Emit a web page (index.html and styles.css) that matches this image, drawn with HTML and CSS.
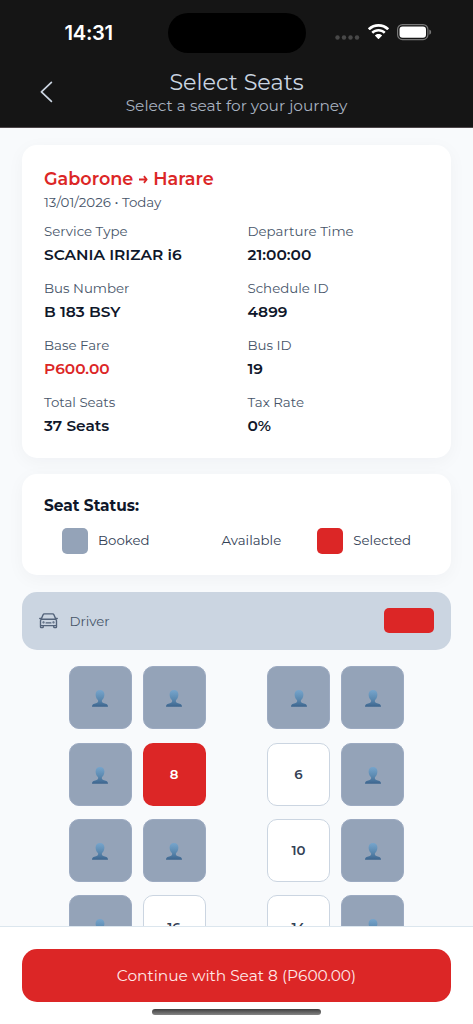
FILE: index.html
```html
<!DOCTYPE html>
<html lang="en">
<head>
<meta charset="utf-8">
<meta name="viewport" content="width=device-width, initial-scale=1">
<title>Select Seats</title>
<link rel="stylesheet" href="styles.css">
</head>
<body>
<svg class="sprite" width="0" height="0" aria-hidden="true">
  <defs>
    <linearGradient id="bust" x1="0" y1="0" x2="0" y2="1">
      <stop offset="0" stop-color="#77a5cc"/>
      <stop offset="0.55" stop-color="#5b89b0"/>
      <stop offset="1" stop-color="#3c648d"/>
    </linearGradient>
    <symbol id="person" viewBox="0 0 16 17">
      <path fill="url(#bust)" d="M8 0C5.200 0 3.500 1.900 3.600 4.700C3.700 7 4.700 9 6 10.100C6.500 11.900 5.900 12.700 4 13.200C1.500 13.800 0 14.400 0 16.800H16C16 14.400 14.500 13.800 12 13.200C10.100 12.700 9.500 11.900 10 10.100C11.300 9 12.300 7 12.400 4.700C12.500 1.900 10.800 0 8 0Z"/>
    </symbol>
  </defs>
</svg>
<div class="screen">
  <header class="header">
    <div class="status">
      <span class="clock">14:31</span>
      <span class="island"></span>
      <span class="signals">
        <svg class="dots" width="25" height="5" viewBox="0 0 25 5" fill="#484848"><circle cx="2.500" cy="2.500" r="2.200"/><circle cx="9" cy="2.500" r="2.200"/><circle cx="15.500" cy="2.500" r="2.200"/><circle cx="22" cy="2.500" r="2.200"/></svg>
        <svg class="wifi" width="21" height="16" viewBox="0 0 21 16" fill="#fff"><path d="M10.500 0C6.500 0 2.900 1.500 .2 4.100Q-.1 4.400.2 4.700L1.500 6Q1.800 6.200 2.100 6C4.300 3.900 7.200 2.700 10.500 2.700S16.700 3.900 18.900 6Q19.200 6.200 19.500 6L20.800 4.700Q21.100 4.400 20.800 4.100C18.100 1.500 14.500 0 10.500 0Z"/><path d="M10.500 5C7.800 5 5.500 6 3.700 7.600Q3.400 7.900 3.700 8.200L5 9.500Q5.300 9.700 5.600 9.500C6.900 8.300 8.600 7.600 10.500 7.600S14.100 8.300 15.400 9.500Q15.700 9.700 16 9.500L17.300 8.200Q17.600 7.900 17.300 7.600C15.500 6 13.200 5 10.500 5Z"/><path d="M10.500 10C9.200 10 8 10.500 7.100 11.200Q6.800 11.500 7.100 11.800L10.200 14.900Q10.500 15.200 10.800 14.900L13.900 11.800Q14.200 11.500 13.900 11.200C13 10.500 11.800 10 10.500 10Z"/></svg>
        <svg class="battery" width="35" height="17" viewBox="0 0 35 17"><rect x=".6" y=".6" width="30.300" height="15" rx="4.800" fill="none" stroke="#777" stroke-width="1.200"/><rect x="2.500" y="2.500" width="26.500" height="11.200" rx="3" fill="#fff"/><path d="M32.300 5.400Q34.200 6.200 34.200 8.100T32.300 10.800Z" fill="#777"/></svg>
      </span>
    </div>
    <div class="nav">
      <svg class="back" width="13" height="22" viewBox="0 0 13 22" fill="none" stroke="#cbd5e1" stroke-width="1.700" stroke-linecap="round" stroke-linejoin="round"><path d="M11.400 1.400L1.400 10.900L11.400 20.400"/></svg>
      <div class="titles">
        <h1 class="title">Select Seats</h1>
        <p class="subtitle">Select a seat for your journey</p>
      </div>
    </div>
  </header>

  <main class="content">
    <section class="card trip">
      <h2 class="route"><span>Gaborone</span><svg class="arrow" width="9" height="9" viewBox="0 0 9 9" fill="none" stroke="#dc2626" stroke-width="1.800" stroke-linejoin="round"><path d="M0 4.500H7.500M4.900 1.200L7.700 4.500L4.900 7.800"/></svg><span>Harare</span></h2>
      <p class="date">13/01/2026 • Today</p>
      <dl class="facts">
        <div class="fact"><dt>Service Type</dt><dd>SCANIA IRIZAR i6</dd></div>
        <div class="fact"><dt>Departure Time</dt><dd>21:00:00</dd></div>
        <div class="fact"><dt>Bus Number</dt><dd>B 183 BSY</dd></div>
        <div class="fact"><dt>Schedule ID</dt><dd>4899</dd></div>
        <div class="fact"><dt>Base Fare</dt><dd class="fare">P600.00</dd></div>
        <div class="fact"><dt>Bus ID</dt><dd>19</dd></div>
        <div class="fact"><dt>Total Seats</dt><dd>37 Seats</dd></div>
        <div class="fact"><dt>Tax Rate</dt><dd>0%</dd></div>
      </dl>
    </section>

    <section class="card legend">
      <h2 class="legend-title">Seat Status:</h2>
      <div class="legend-items">
        <div class="key"><span class="swatch booked"></span><span>Booked</span></div>
        <div class="key"><span class="swatch free"></span><span>Available</span></div>
        <div class="key"><span class="swatch chosen"></span><span>Selected</span></div>
      </div>
    </section>

    <section class="driver">
      <svg class="car" width="19" height="16" viewBox="0 0 20 17" fill="none" stroke="#53637a" stroke-width="1.450" stroke-linejoin="round" stroke-linecap="round"><path d="M2.200 6.600L4.200 2Q4.600 .9 5.700 .9H14.300Q15.400 .9 15.800 2L17.800 6.600M.7 5.800H1.900M18.100 5.800H19.300M2.200 6.600H17.800L18.500 8.200V14.900Q18.500 15.600 17.800 15.600H16.300Q15.600 15.600 15.600 14.900V13.400H4.400V14.900Q4.400 15.600 3.700 15.600H2.200Q1.500 15.600 1.500 14.900V8.200ZM1.500 13.400H4.400M15.600 13.400H18.500M7.500 10.500H12.500"/><circle cx="4.700" cy="10" r=".45"/><circle cx="15.300" cy="10" r=".45"/></svg>
      <span class="driver-label">Driver</span>
      <span class="door"></span>
    </section>

    <section class="seats">
      <div class="row">
        <div class="pair"><div class="seat taken"><svg><use href="#person"/></svg></div><div class="seat taken"><svg><use href="#person"/></svg></div></div>
        <div class="pair"><div class="seat taken"><svg><use href="#person"/></svg></div><div class="seat taken"><svg><use href="#person"/></svg></div></div>
      </div>
      <div class="row">
        <div class="pair"><div class="seat taken"><svg><use href="#person"/></svg></div><div class="seat selected">8</div></div>
        <div class="pair"><div class="seat open">6</div><div class="seat taken"><svg><use href="#person"/></svg></div></div>
      </div>
      <div class="row">
        <div class="pair"><div class="seat taken"><svg><use href="#person"/></svg></div><div class="seat taken"><svg><use href="#person"/></svg></div></div>
        <div class="pair"><div class="seat open">10</div><div class="seat taken"><svg><use href="#person"/></svg></div></div>
      </div>
      <div class="row">
        <div class="pair"><div class="seat taken"><svg><use href="#person"/></svg></div><div class="seat open">16</div></div>
        <div class="pair"><div class="seat open">14</div><div class="seat taken"><svg><use href="#person"/></svg></div></div>
      </div>
    </section>
  </main>

  <footer class="footer">
    <button class="continue" type="button">Continue with Seat 8 (P600.00)</button>
    <span class="home-bar"></span>
  </footer>
</div>
</body>
</html>
```
FILE: styles.css
```css
* { box-sizing: border-box; margin: 0; padding: 0; }
body { font-family: Montserrat, Inter, sans-serif; color: #0f172a; background: #f8fafc; }
.sprite { position: absolute; }
.screen { display: flex; flex-direction: column; width: 473px; height: 1024px; overflow: hidden; background: #f8fafc; }

.header { flex: none; height: 128px; background: #151515; border-bottom: 1px solid #4d4649; }
.status { display: grid; grid-template-columns: 167.500px 138px 1fr; height: 66px; padding-top: 12.500px; }
.clock { padding: 6.500px 0 0 64.500px; font: 600 20.200px/27px Inter, sans-serif; letter-spacing: -0.300px; color: #fff; }
.island { height: 40.500px; border-radius: 21px; background: #000; }
.signals { display: flex; padding: 11.500px 0 0 29.500px; }
.dots { margin-top: 11px; }
.wifi { margin-left: 7.500px; }
.battery { margin-left: 8px; }
.nav { display: grid; grid-template-columns: 60px 1fr 60px; }
.back { margin: 14.500px 0 0 40px; }
.titles { text-align: center; }
.title { margin-top: 2px; font-size: 22.300px; font-weight: 400; line-height: 28px; color: #cbd5e1; }
.subtitle { font-size: 15.400px; line-height: 19px; color: #a8b2c0; }

.content { flex: 1; min-height: 0; overflow: hidden; padding: 17px 22px 0; }
.card { padding: 0 22px; border-radius: 15px; background: #fff; box-shadow: 0 4px 18px rgba(15, 23, 42, 0.040); }
.trip { height: 312.500px; padding-top: 22px; }
.route { display: flex; align-items: center; height: 23px; font-size: 17.600px; font-weight: 600; color: #dc2626; }
.arrow { margin: 1px 5.500px 0 5.500px; }
.date { margin-top: 3px; font-size: 13.400px; line-height: 18px; color: #475569; }
.facts { display: grid; grid-template-columns: 1fr 1fr; column-gap: 22px; margin-top: 11px; }
.fact { height: 57.100px; }
.fact dt { font-size: 13.350px; line-height: 18px; color: #475569; }
.fact dd { margin-top: 3.500px; font-size: 15.400px; font-weight: 600; line-height: 21px; color: #0f172a; }
.fact .fare { color: #dc2626; }

.legend { height: 101px; margin-top: 16.500px; padding-top: 21px; }
.legend-title { font-size: 15.400px; font-weight: 700; line-height: 22px; }
.legend-items { display: flex; justify-content: space-around; margin-top: 11px; }
.key { display: flex; align-items: center; gap: 10.500px; font-size: 13.300px; line-height: 16px; color: #334155; }
.key span:last-child { padding-bottom: 1px; }
.swatch { width: 25.500px; height: 25.500px; border-radius: 5px; }
.booked { background: #94a3b8; }
.free { background: #fff; }
.chosen { background: #dc2626; }

.driver { display: flex; align-items: center; height: 58px; margin-top: 16.700px; padding: 0 17px; border-radius: 15px; background: #cbd5e1; }
.driver-label { margin-left: 11.500px; font-size: 13.300px; color: #475569; }
.door { width: 50.500px; height: 25px; margin-left: auto; border-radius: 5px; background: #dc2626; }

.seats { margin-top: 16.800px; padding: 0 47px 0 46.500px; }
.row { display: flex; justify-content: space-between; height: 76.200px; }
.pair { display: flex; gap: 11px; }
.seat { display: flex; align-items: center; justify-content: center; width: 63px; height: 63px; border-radius: 10px; font-size: 13.300px; font-weight: 600; }
.taken { background: #94a3b8; border: 1px solid #9caac1; }
.taken svg { width: 16px; height: 17px; margin-top: 2px; }
.selected { background: #dc2626; color: #fff; }
.open { background: #fff; border: 1px solid #cbd5e1; color: #334155; }

.footer { flex: none; display: flex; flex-direction: column; align-items: center; height: 98px; padding: 22px 22px 0; border-top: 1px solid #dce6ee; background: #fff; }
.continue { width: 100%; height: 52.500px; padding-top: 1px; border: 0; border-radius: 15px; background: #dc2626; color: #ffe9e9; font-family: inherit; font-size: 15.400px; font-weight: 400; }
.home-bar { width: 169px; height: 5.500px; margin-top: 7.500px; border-radius: 3px; background: linear-gradient(#3f3f3f, #858585); }
```
